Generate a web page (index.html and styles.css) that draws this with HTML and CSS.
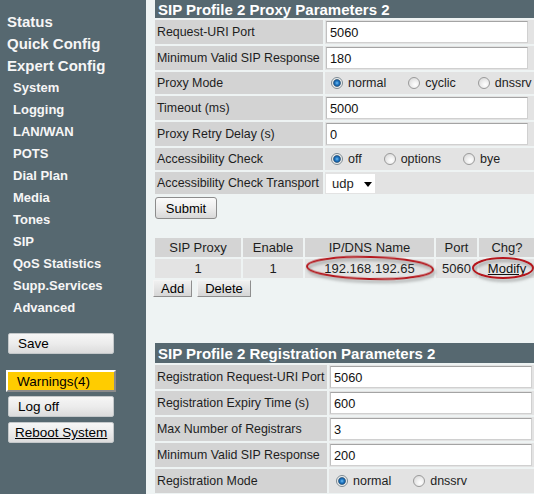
FILE: index.html
```html
<!DOCTYPE html>
<html lang="en">
<head>
<meta charset="utf-8">
<title>SIP Profile 2 Proxy Parameters</title>
<link rel="stylesheet" href="styles.css">
</head>
<body>
<div class="page">
  <nav class="sidebar">
    <ul class="menu">
      <li class="top"><a href="#">Status</a></li>
      <li class="top"><a href="#">Quick Config</a></li>
      <li class="top"><a href="#">Expert Config</a></li>
      <li class="sub"><a href="#">System</a></li>
      <li class="sub"><a href="#">Logging</a></li>
      <li class="sub"><a href="#">LAN/WAN</a></li>
      <li class="sub"><a href="#">POTS</a></li>
      <li class="sub"><a href="#">Dial Plan</a></li>
      <li class="sub"><a href="#">Media</a></li>
      <li class="sub"><a href="#">Tones</a></li>
      <li class="sub"><a href="#">SIP</a></li>
      <li class="sub"><a href="#">QoS Statistics</a></li>
      <li class="sub"><a href="#">Supp.Services</a></li>
      <li class="sub"><a href="#">Advanced</a></li>
    </ul>
    <div class="actions">
      <button class="side-btn save">Save</button>
      <button class="side-btn warn">Warnings(4)</button>
      <button class="side-btn logoff">Log off</button>
      <button class="side-btn reboot"><span>Reboot System</span></button>
    </div>
  </nav>

  <main class="content">
    <table class="form proxy-form">
      <colgroup><col class="c-label1"><col class="c-value1"></colgroup>
      <tr><th colspan="2" class="head head-first">SIP Profile 2 Proxy Parameters 2</th></tr>
      <tr class="row-in"><td class="label">Request-URI Port</td><td class="value"><input type="text" value="5060"></td></tr>
      <tr class="row-in"><td class="label">Minimum Valid SIP Response</td><td class="value"><input type="text" value="180"></td></tr>
      <tr class="row-radio"><td class="label">Proxy Mode</td><td class="value">
        <div class="radios">
          <label class="opt"><input type="radio" name="pm" checked><span>normal</span></label>
          <label class="opt"><input type="radio" name="pm"><span>cyclic</span></label>
          <label class="opt"><input type="radio" name="pm"><span>dnssrv</span></label>
        </div></td></tr>
      <tr class="row-in"><td class="label">Timeout (ms)</td><td class="value"><input type="text" value="5000"></td></tr>
      <tr class="row-in"><td class="label">Proxy Retry Delay (s)</td><td class="value"><input type="text" value="0"></td></tr>
      <tr class="row-radio"><td class="label">Accessibility Check</td><td class="value">
        <div class="radios">
          <label class="opt"><input type="radio" name="ac" checked><span>off</span></label>
          <label class="opt"><input type="radio" name="ac"><span>options</span></label>
          <label class="opt"><input type="radio" name="ac"><span>bye</span></label>
        </div></td></tr>
      <tr class="row-radio"><td class="label">Accessibility Check Transport</td><td class="value">
        <span class="select"><span class="select-text">udp</span><svg class="select-arrow" width="8" height="5" viewBox="0 0 8 5"><path d="M0 0h8L4 5z" fill="#000"/></svg></span></td></tr>
    </table>

    <button class="submit">Submit</button>

    <div class="list-wrap">
      <table class="list">
        <colgroup><col class="l1"><col class="l2"><col class="l3"><col class="l4"><col class="l5"></colgroup>
        <tr class="list-head"><th>SIP Proxy</th><th>Enable</th><th>IP/DNS Name</th><th>Port</th><th>Chg?</th></tr>
        <tr class="list-row"><td>1</td><td>1</td><td>192.168.192.65</td><td>5060</td><td><a href="#" class="modify">Modify</a></td></tr>
      </table>
      <svg class="annot" width="384" height="40" viewBox="0 0 384 40">
        <defs>
          <filter id="sh" x="-20%" y="-50%" width="140%" height="220%">
            <feDropShadow dx="1.5" dy="2.5" stdDeviation="1.4" flood-color="#7a7a7a" flood-opacity="0.75"/>
          </filter>
        </defs>
        <ellipse cx="217" cy="32" rx="63" ry="11" fill="none" stroke="#b5121b" stroke-width="2" filter="url(#sh)" transform="rotate(1.5 217 32)"/>
        <ellipse cx="350" cy="32" rx="30" ry="10" fill="none" stroke="#b5121b" stroke-width="2" filter="url(#sh)"/>
      </svg>
    </div>
    <div class="list-actions">
      <button class="small-btn">Add</button>
      <button class="small-btn">Delete</button>
    </div>

    <table class="form reg-form">
      <colgroup><col class="c-label2"><col class="c-value2"></colgroup>
      <tr><th colspan="2" class="head">SIP Profile 2 Registration Parameters 2</th></tr>
      <tr class="row-in"><td class="label">Registration Request-URI Port</td><td class="value"><input type="text" value="5060"></td></tr>
      <tr class="row-in"><td class="label">Registration Expiry Time (s)</td><td class="value"><input type="text" value="600"></td></tr>
      <tr class="row-in"><td class="label">Max Number of Registrars</td><td class="value"><input type="text" value="3"></td></tr>
      <tr class="row-in"><td class="label">Minimum Valid SIP Response</td><td class="value"><input type="text" value="200"></td></tr>
      <tr class="row-in"><td class="label">Registration Mode</td><td class="value">
        <div class="radios radios-reg">
          <label class="opt"><input type="radio" name="rm" checked><span>normal</span></label>
          <label class="opt"><input type="radio" name="rm"><span>dnssrv</span></label>
        </div></td></tr>
    </table>
  </main>
</div>
</body>
</html>
```

FILE: styles.css
```css
html, body {
  margin: 0;
  padding: 0;
  overflow: hidden;
}
body {
  font-family: "Liberation Sans", Arial, sans-serif;
  color: #1e1e1e;
  background: #eef3f3;
}
.page {
  display: flex;
  width: 534px;
  height: 494px;
  overflow: hidden;
}

/* ---------- sidebar ---------- */
.sidebar {
  width: 146px;
  flex: none;
  background: #566870;
}
.menu {
  list-style: none;
  margin: 0;
  padding: 11px 0 0 0;
}
.menu li {
  line-height: 22px;
  height: 22px;
  white-space: nowrap;
}
.menu a {
  color: #f6f6f6;
  text-decoration: none;
  font-weight: bold;
}
.menu .top {
  padding-left: 7px;
  font-size: 15px;
}
.menu .sub {
  padding-left: 13px;
  font-size: 13px;
}
.actions {
  display: flex;
  flex-direction: column;
  align-items: flex-start;
  padding-top: 14px;
}
.side-btn {
  box-sizing: border-box;
  width: 106px;
  height: 21px;
  margin: 0 0 0 8px;
  padding: 0 0 0 9px;
  text-align: left;
  font-family: "Liberation Sans", Arial, sans-serif;
  font-size: 13.5px;
  color: #000;
  border: 1px solid #c4c8ca;
  border-radius: 2px;
  background: linear-gradient(#f6f6f6 0%, #ececec 50%, #dcdcdc 100%);
}
.side-btn.warn {
  width: 110px;
  height: 22px;
  margin-left: 6px;
  margin-top: 16px;
  background: #ffcc00;
  border-radius: 0;
  border: 2px solid;
  border-color: #ffffff #8a8a8a #8a8a8a #ffffff;
}
.side-btn.logoff {
  margin-top: 4px;
}
.side-btn.reboot {
  margin-top: 5px;
  padding-left: 6px;
}
.side-btn.reboot span {
  text-decoration: underline;
}

/* ---------- main ---------- */
.content {
  flex: 1;
  min-width: 0;
  padding-left: 9px;
  background: #eef3f3;
}
.form, .list {
  border-collapse: separate;
  border-spacing: 2px;
  table-layout: fixed;
  margin-left: -2px;
}
.proxy-form {
  width: 383px;
  margin-top: -2px;
}
.c-label1 { width: 168px; }
.c-value1 { width: 209px; }
.reg-form {
  width: 383px;
  margin-top: 44px;
}
.c-label2 { width: 172px; }
.c-value2 { width: 205px; }

.head {
  background: #566870;
  color: #fff;
  font-size: 15px;
  font-weight: bold;
  text-align: left;
  padding: 0 0 0 3px;
  height: 20px;
  white-space: nowrap;
}
.head-first {
  height: 18px;
}
.form td {
  padding: 0;
  font-size: 12.4px;
  white-space: nowrap;
}
.form .label {
  background: #d3d3d3;
  padding-left: 2px;
}
.form .value {
  background: #e3e3e3;
  padding-left: 1px;
}
.row-in td { height: 24px; }
.row-radio td { height: 22px; }

.value input[type="text"] {
  box-sizing: border-box;
  display: block;
  width: 202px;
  height: 22px;
  margin: 0;
  padding: 0 0 0 3px;
  border: 1px solid #d0d0d0;
  border-top-color: #a4a4a4;
  border-left-color: #c0c0c0;
  background: #fff;
  font-family: "Liberation Sans", Arial, sans-serif;
  font-size: 12.8px;
  color: #111;
  outline: none;
}

.radios {
  display: flex;
  align-items: center;
  gap: 22px;
  padding-left: 5px;
  font-size: 12.5px;
}
.radios-reg {
  padding-left: 6px;
}
.opt {
  display: inline-flex;
  align-items: center;
  gap: 5px;
}
.opt input[type="radio"] {
  appearance: none;
  -webkit-appearance: none;
  box-sizing: border-box;
  width: 12px;
  height: 12px;
  margin: 0;
  border-radius: 50%;
  border: 1px solid #9a9a9a;
  background: radial-gradient(circle at 62% 66%, #ffffff 0, #f1f1f1 35%, #d2d2d2 100%);
}
.opt input[type="radio"]:checked {
  border-color: #7d8a92;
  background: radial-gradient(circle at 50% 50%, #7cc2f2 0, #2f8ad4 1.3px, #14589a 3px, #5b7a92 3.6px, #e6e6e6 4.2px, #f8f8f8 5px);
}

.select {
  position: relative;
  display: block;
  box-sizing: border-box;
  width: 49px;
  height: 19px;
  margin-left: 0;
  background: #fff;
  font-size: 13px;
  line-height: 19px;
}
.select-text {
  padding-left: 6px;
}
.select-arrow {
  position: absolute;
  left: 38px;
  top: 8px;
}

.submit {
  display: block;
  box-sizing: border-box;
  width: 62px;
  height: 22px;
  margin: 1px 0 0 0;
  padding: 0;
  font-family: "Liberation Sans", Arial, sans-serif;
  font-size: 13px;
  color: #000;
  border: 1px solid #8c8c8c;
  border-radius: 3px;
  background: linear-gradient(#fbfbfb 0%, #ededed 50%, #d8d8d8 100%);
}

.list-wrap {
  position: relative;
  margin-top: 17px;
}
.list {
  width: 384px;
}
.l1 { width: 86px; }
.l2 { width: 60px; }
.l3 { width: 129px; }
.l4 { width: 41px; }
.l5 { width: 56px; }
.list th, .list td {
  padding: 0;
  height: 19px;
  font-size: 13px;
  font-weight: normal;
  text-align: center;
  color: #1e1e1e;
  white-space: nowrap;
}
.list th { background: #d4d4d4; }
.list td { background: #e3e3e3; }
.modify {
  color: #111;
  text-decoration: underline;
}
.annot {
  position: absolute;
  left: -2px;
  top: 0;
  overflow: visible;
  pointer-events: none;
}

.list-actions {
  display: flex;
  gap: 5px;
  margin-left: -2px;
}
.small-btn {
  box-sizing: border-box;
  height: 17px;
  padding: 0 7px;
  margin: 0;
  font-family: "Liberation Sans", Arial, sans-serif;
  font-size: 13px;
  line-height: 15px;
  color: #000;
  border: 1px solid;
  border-color: #f4f4f4 #8e8e8e #8e8e8e #f4f4f4;
  background: linear-gradient(#f0f0f0, #d6d6d6);
}
```
